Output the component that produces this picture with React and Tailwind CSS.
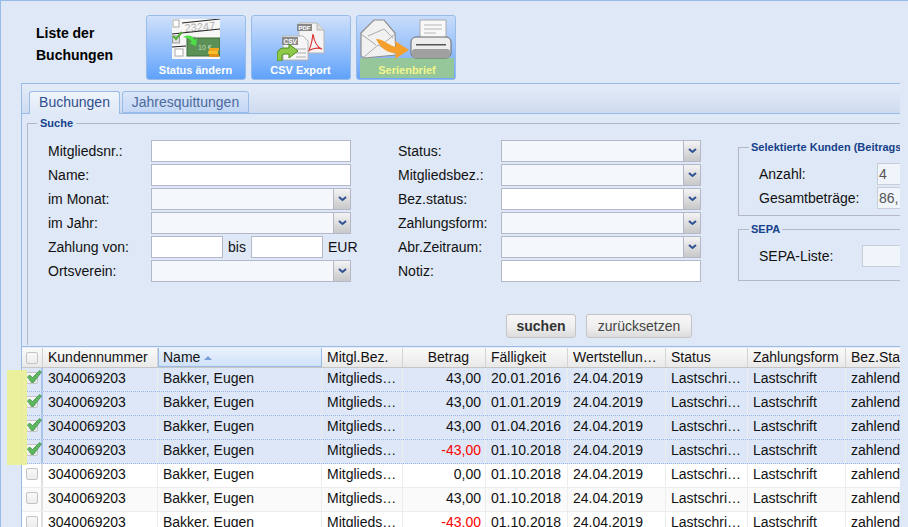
import React from "react";

const Field = ({ w = "w-[200px]" }) => <div className={`${w} h-[22px] bg-white border border-[#b5b8c8] shrink-0`} />;

const Combo = ({ white }) => (
  <div className={`w-[200px] h-[22px] border border-[#b5b8c8] flex shrink-0 ${white ? "bg-white" : "bg-[#f4f7fc]"}`}>
    <div className="flex-1" />
    <div className="w-[17px] bg-gradient-to-b from-[#f4f4f4] to-[#c8c8c8] border-l border-[#b5b8c8] flex items-center justify-center">
      <svg width="9" height="6" viewBox="0 0 9 6"><path d="M1 1l3.5 3L8 1" fill="none" stroke="#2f4f94" strokeWidth="2" /></svg>
    </div>
  </div>
);

const Label = ({ children, w = "w-[103px]" }) => <div className={`${w} shrink-0 text-[14px] leading-[22px] text-[#111]`}>{children}</div>;

const Row = ({ label, children, w }) => (
  <div className="flex h-[22px] items-center">
    <Label w={w}>{label}</Label>
    {children}
  </div>
);

const IconStatus = () => (
  <svg width="48" height="40" viewBox="0 0 48 40" className="block">
    <rect width="48" height="40" fill="#f7f7f7" />
    <text x="13" y="13" fontSize="11" fontFamily="Liberation Sans" fill="#b5b5b5" transform="rotate(-5 13 13)">23247</text>
    <text x="14" y="24" fontSize="9" fontFamily="Liberation Sans" fill="#cfcfcf" transform="rotate(-5 14 24)">23</text>
    <path d="M10 4L48 0M0 15L48 10M0 28l14-1" stroke="#222" strokeWidth="1" />
    <rect x="1" y="1" width="6" height="7" fill="#fff" stroke="#aaa" />
    <rect x="0.5" y="17" width="7" height="7" fill="#ddd" stroke="#999" />
    <rect x="3" y="30" width="8" height="7" fill="#fff" stroke="#aaa" />
    <path d="M1 17l3 3 6-7" fill="none" stroke="#55b03a" strokeWidth="2" />
    <rect x="15" y="19" width="33" height="18" fill="#5b9157" stroke="#3d6d3d" />
    <text x="26" y="31" fontSize="7" fontFamily="Liberation Sans" fill="#c7dcc0">10 €</text>
    <path d="M11 18c6-3 10-1 12 3l2-2-1 8-7-3 3-1c-2-3-5-4-9-5z" fill="#4ee04a" />
    <rect x="37" y="29" width="10" height="3" rx="1" fill="#f3a71f" />
    <rect x="36" y="32" width="10" height="3" rx="1" fill="#f8c02c" />
    <rect x="37" y="35" width="10" height="3" rx="1" fill="#e58f12" />
  </svg>
);

const IconCsv = () => (
  <svg width="48" height="39" viewBox="0 0 48 39" className="block mt-[3px]">
    <path d="M22 1h18l7 7v23H22z" fill="#f4f4f4" stroke="#b4b4b4" />
    <path d="M40 1v7h7" fill="#ddd" stroke="#b4b4b4" />
    <rect x="20" y="2" width="15" height="7" fill="#888" />
    <text x="21.500" y="8" fontSize="6" fontWeight="700" fontFamily="Liberation Sans" fill="#fff">PDF</text>
    <path d="M36 12c1 6 3 13 9 15-5-2-13 0-15 4 3-3 5-11 6-19z" fill="none" stroke="#d33" strokeWidth="1.2" />
    <path d="M6 14h20l5 5v19H6z" fill="#f6f6f6" stroke="#b4b4b4" />
    <rect x="5" y="15" width="16" height="8" fill="#8a8a8a" />
    <text x="6.500" y="21.500" fontSize="6.500" fontWeight="700" fontFamily="Liberation Sans" fill="#fff">CSV</text>
    <path d="M19 27h10M19 31h10M19 35h10" stroke="#aaa" />
    <path d="M0 39v-6c0-4 3-7 7-7h5v-4l9 7-9 7v-4H7c-2 0-2 2-2 4v3z" fill="#8ec94a" stroke="#4e8a1e" />
  </svg>
);

const IconSerial = () => (
  <svg width="92" height="41" viewBox="0 0 92 41" className="block">
    <path d="M1 14L14 1h10l11 13 1 22-32 3-3-2z" fill="#f1f1f1" stroke="#8f8f8f" strokeWidth="1.2" />
    <path d="M4 38l14-12 18 9M1 15l15 11M35 15L24 24M8 17l16-7 9 9" fill="none" stroke="#aaa" />
    <path d="M16 20c8 0 13 7 20 8l-1-6 14 9-14 9 1-6c-10 0-16-6-20-14z" fill="#f5a02c" />
    <rect x="60" y="1" width="26" height="22" fill="#f8f8f8" stroke="#aaa" />
    <path d="M64 6h18M64 10h18M64 14h12" stroke="#ccc" strokeWidth="1.5" />
    <rect x="51" y="18" width="40" height="21" rx="5" fill="#ededed" stroke="#666" />
    <rect x="52" y="30" width="38" height="9" rx="3" fill="#a0a0a0" />
    <rect x="56" y="25" width="30" height="1.5" fill="#555" />
  </svg>
);

const ToolBtn = ({ icon, label, active }) => (
  <div className={`w-[100px] h-[65px] rounded-[3px] border border-[#99bbe8] overflow-hidden shrink-0 relative ${active ? "bg-gradient-to-b from-[#c8dcfa] to-[#6aa5fb]" : "bg-gradient-to-b from-[#cfe0fa] to-[#5fa2fb]"}`}>
    <div className={`absolute right-[1px] bottom-[1px] h-[20px] text-center text-[11px] leading-[24px] font-bold ${active ? "left-[3px] bg-[#96c79a] text-[#f3f58c]" : "left-0 text-white"}`}>{label}</div>
    <div className="relative h-[42px] pt-[3px] flex justify-center">{icon}</div>
  </div>
);

const columns = [
  { w: "w-[115px]", label: "Kundennummer", key: "k" },
  { w: "w-[164px]", label: "Name", key: "n", sort: true },
  { w: "w-[81px]", label: "Mitgl.Bez.", key: "m" },
  { w: "w-[83px]", label: "Betrag", key: "b", right: true },
  { w: "w-[82px]", label: "Fälligkeit", key: "f" },
  { w: "w-[98px]", label: "Wertstellun…", key: "ws" },
  { w: "w-[82px]", label: "Status", key: "s" },
  { w: "w-[98px]", label: "Zahlungsform", key: "z" },
  { w: "w-[60px]", label: "Bez.Status", key: "bs" },
];

const rows = [
  { b: "43,00", f: "20.01.2016", sel: true },
  { b: "43,00", f: "01.01.2019", sel: true },
  { b: "43,00", f: "01.04.2016", sel: true },
  { b: "-43,00", f: "01.10.2018", sel: true },
  { b: "0,00", f: "01.10.2018" },
  { b: "43,00", f: "01.10.2018", alt: true },
  { b: "-43,00", f: "01.10.2018" },
].map((r) => ({ k: "3040069203", n: "Bakker, Eugen", m: "Mitglieds…", ws: "24.04.2019", s: "Lastschri…", z: "Lastschrift", bs: "zahlend", ...r }));

const Check = ({ on }) => (
  <div className="relative w-[12px] h-[12px] rounded-[2px] border border-[#c4c4c4] bg-gradient-to-b from-[#f8f8f8] to-[#ececec]">
    {on && (
      <svg width="15" height="13" viewBox="0 0 15 13" className="absolute left-0 top-[-3px]">
        <path d="M0.5 7l2-2 3 2.500L12.500 0.500l2 1.500-8 10.500H4.500z" fill="#5cb85c" stroke="#3e8a4a" strokeWidth="0.7" />
      </svg>
    )}
  </div>
);

export default function App() {
  return (
    <div className="relative w-[908px] h-[527px] overflow-hidden bg-[#dfe8f6] border-t border-l border-[#99bbe8] text-[#111]" style={{ fontFamily: '"Liberation Sans", Arial, sans-serif' }}>
      <div className="flex h-[82px] pt-[14px]">
        <div className="w-[145px] pl-[35px] pt-[7px] text-[14px] leading-[22px] font-bold text-black shrink-0">
          Liste der<br />Buchungen
        </div>
        <div className="flex gap-[5px]">
          <ToolBtn icon={<IconStatus />} label="Status ändern" />
          <ToolBtn icon={<IconCsv />} label="CSV Export" />
          <ToolBtn active icon={<IconSerial />} label="Serienbrief" />
        </div>
      </div>

      <div className="ml-[20px] w-[879px] border-t border-l border-[#99bbe8] overflow-hidden">
        <div className="h-[30px] bg-gradient-to-b from-[#e4ecf8] to-[#cedbef] border-b border-[#99bbe8] flex gap-[2px] pl-[7px] pt-[7px]">
          <div className="w-[91px] h-[23px] rounded-t-[3px] border border-b-0 border-[#99bbe8] bg-gradient-to-b from-[#f0f5fc] to-[#dfe8f6] text-center text-[14px] leading-[21px] text-[#2f4f8f]">Buchungen</div>
          <div className="w-[127px] h-[22px] rounded-t-[3px] border border-[#99bbe8] bg-gradient-to-b from-[#dbe6f7] to-[#c3d8f6] text-center text-[14px] leading-[20px] text-[#4c6a9e]">Jahresquittungen</div>
        </div>

        <div className="h-[231px] pl-[5px] pt-[3px]">
          <fieldset className="border-t border-l border-[#b5b8c8] h-[228px] w-[880px] pt-[10px] relative">
            <legend className="ml-[9px] px-[3px] text-[11px] leading-[13px] font-bold text-[#15428b] h-[13px]">Suche</legend>
            <div className="flex pl-[20px]">
              <div className="w-[350px] shrink-0 flex flex-col gap-[2px]">
                <Row label="Mitgliedsnr.:"><Field /></Row>
                <Row label="Name:"><Field /></Row>
                <Row label="im Monat:"><Combo /></Row>
                <Row label="im Jahr:"><Combo /></Row>
                <Row label="Zahlung von:">
                  <Field w="w-[72px]" />
                  <span className="w-[28px] text-center text-[14px]">bis</span>
                  <Field w="w-[72px]" />
                  <span className="ml-[5px] text-[14px]">EUR</span>
                </Row>
                <Row label="Ortsverein:"><Combo /></Row>
              </div>
              <div className="w-[340px] shrink-0 flex flex-col gap-[2px]">
                <Row label="Status:"><Combo /></Row>
                <Row label="Mitgliedsbez.:"><Combo /></Row>
                <Row label="Bez.status:"><Combo white /></Row>
                <Row label="Zahlungsform:"><Combo /></Row>
                <Row label="Abr.Zeitraum:"><Combo /></Row>
                <Row label="Notiz:"><Field /></Row>
              </div>
              <div className="w-[180px] shrink-0 flex flex-col">
                <fieldset className="border border-r-0 border-[#b5b8c8] h-[75px] mt-[1px]">
                  <legend className="ml-[10px] px-[2px] text-[11px] leading-[13px] font-bold text-[#15428b] whitespace-nowrap w-[151px] overflow-hidden">Selektierte Kunden (Beitrags</legend>
                  <div className="flex flex-col gap-[2px] mt-[9px] pl-[20px]">
                    <Row label="Anzahl:" w="w-[118px]"><div className="w-[30px] h-[22px] bg-[#f0f4fb] border border-[#c8ced8] text-[14px] leading-[20px] text-[#555] pl-[1px]">4</div></Row>
                    <Row label="Gesamtbeträge:" w="w-[118px]"><div className="w-[30px] h-[22px] bg-[#f0f4fb] border border-[#c8ced8] text-[14px] leading-[20px] text-[#555] pl-[1px]">86,</div></Row>
                  </div>
                </fieldset>
                <fieldset className="border border-r-0 border-[#b5b8c8] h-[58px] mt-[7px]">
                  <legend className="ml-[10px] px-[2px] text-[11px] leading-[13px] font-bold text-[#15428b]">SEPA</legend>
                  <div className="mt-[9px] pl-[20px]">
                    <Row label="SEPA-Liste:" w="w-[103px]"><div className="w-[40px] h-[22px] bg-[#f0f4fb] border border-[#c8ced8]" /></Row>
                  </div>
                </fieldset>
              </div>
            </div>
            <div className="flex gap-[10px] pl-[478px] mt-[32px]">
              <div className="w-[70px] h-[24px] rounded-[3px] border border-[#c4c4c4] bg-gradient-to-b from-[#f6f6f6] via-[#f0f0f0] to-[#dcdcdc] text-center text-[14px] leading-[22px] font-bold text-[#333]">suchen</div>
              <div className="w-[106px] h-[24px] rounded-[3px] border border-[#c4c4c4] bg-gradient-to-b from-[#f6f6f6] via-[#f0f0f0] to-[#dcdcdc] text-center text-[14px] leading-[22px] text-[#444]">zurücksetzen</div>
            </div>
          </fieldset>
        </div>

        <div className="border-t border-[#99bbe8] mt-[1px] pt-[1px] bg-[#e8eef9]">
          <div className="flex h-[20px] bg-gradient-to-b from-[#fafafa] to-[#e9e9e9] border-b border-[#c5c5c5]">
            <div className="w-[21px] shrink-0 flex items-center justify-center border-r border-[#d0d0d0]"><Check /></div>
            {columns.map((c) => (
              <div key={c.key} className={`${c.w} shrink-0 text-[14px] leading-[19px] whitespace-nowrap overflow-hidden border-r border-[#d5d5d5] ${c.right ? "text-right pr-[16px]" : "px-[5px]"} ${c.sort ? "bg-gradient-to-b from-[#eaf2fd] to-[#cfe1f9] border-l border-l-[#99bbe8] border-r-[#99bbe8] border-b border-b-[#99bbe8] pl-[4px]" : ""}`}>
                {c.label}
                {c.sort && <span className="inline-block ml-[4px] mb-[2px] w-0 h-0 border-x-[4px] border-x-transparent border-b-[4px] border-b-[#7a9fd8]" />}
              </div>
            ))}
          </div>
          {rows.map((r, i) => (
            <div key={i} className={`flex h-[24px] ${r.sel ? "bg-[#dde7f7] border-b border-dotted border-[#9ab3e6]" : r.alt ? "bg-[#fafafa] border-b border-[#ededed]" : "bg-white border-b border-[#ededed]"}`}>
              <div className={`w-[21px] shrink-0 flex justify-center pt-[4px] border-r-2 ${r.sel ? "border-[#a9c4ea]" : "border-[#e0e0e0]"}`}><Check on={r.sel} /></div>
              {columns.map((c) => (
                <div key={c.key} className={`${c.w} shrink-0 pl-[5px] text-[14px] leading-[20px] whitespace-nowrap overflow-hidden border-r border-[#ededed] ${c.right ? "text-right pr-[4px]" : ""} ${c.key === "b" && r.b.startsWith("-") ? "text-[#f00]" : ""}`}>
                  {r[c.key]}
                </div>
              ))}
            </div>
          ))}
        </div>
      </div>

      <div className="absolute left-[6px] top-[369px] w-[20px] h-[95px] bg-[#ecf194]/90" />
    </div>
  );
}
